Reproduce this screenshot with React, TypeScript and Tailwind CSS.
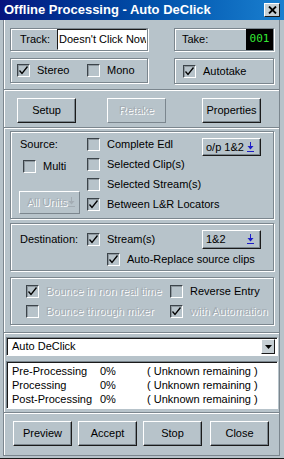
import React from "react";

const font = { fontFamily: '"Liberation Sans", Arial, sans-serif' };

function Tick() {
  return (
    <svg className="absolute left-0 top-0 h-[11px] w-[11px]" viewBox="0 0 11 11" fill="none">
      <path d="M1.5 5.5 L4 8.5 L9.5 1.5" stroke="#000" strokeWidth={1.3} />
    </svg>
  );
}

function Box({ checked }: { checked?: boolean }) {
  return (
    <span className="relative inline-block h-[13px] w-[13px] shrink-0 border border-t-[#3c444a] border-l-[#3c444a] border-r-white border-b-white shadow-[inset_1px_1px_0_#8d979e]">
      {checked && <Tick />}
    </span>
  );
}

function Check({
  label,
  checked,
  disabled,
}: {
  label: string;
  checked?: boolean;
  disabled?: boolean;
}) {
  return (
    <div className="flex items-center gap-[7px] whitespace-nowrap">
      <Box checked={checked} />
      <span
        className={
          disabled
            ? "text-[#a3acb3] [text-shadow:1px_1px_0_#fff]"
            : "text-black"
        }
      >
        {label}
      </span>
    </div>
  );
}

function Arrow({ color = "#1c1cc8" }: { color?: string }) {
  return (
    <svg className="h-[10px] w-[7px] shrink-0" viewBox="0 0 7 10" fill="none">
      <path d="M3.5 0 V6" stroke={color} strokeWidth={1} />
      <path d="M0.5 4 H6.5 L3.5 7.5 Z" fill={color} />
      <path d="M0 9.5 H7" stroke={color} strokeWidth={1} />
    </svg>
  );
}

function Button({ label, disabled }: { label: string; disabled?: boolean }) {
  return (
    <div
      className={
        disabled
          ? "flex h-[25px] w-[59px] items-center justify-center border border-t-white border-l-white border-r-[#7b868e] border-b-[#7b868e] text-[#a3acb3] [text-shadow:1px_1px_0_#fff]"
          : "flex h-[25px] w-[59px] items-center justify-center border border-t-white border-l-white border-r-[#1a1a1a] border-b-[#1a1a1a] shadow-[inset_-1px_-1px_0_#7b868e] text-black"
      }
    >
      {label}
    </div>
  );
}

function Dropdown({ label, h }: { label: string; h: string }) {
  return (
    <div
      className={`flex ${h} w-[59px] items-center justify-between border border-t-white border-l-white border-r-[#1a1a1a] border-b-[#1a1a1a] shadow-[inset_-1px_-1px_0_#7b868e] pl-[3px] pr-[6px]`}
    >
      <span>{label}</span>
      <Arrow />
    </div>
  );
}

function Separator() {
  return <div className="border-t border-t-[#7b868e] border-b border-b-white" />;
}

const status = ["Pre-Processing", "Processing", "Post-Processing"];

export default function App() {
  return (
    <div
      className="flex h-[459px] w-[284px] flex-col overflow-hidden bg-[#b7c3ca] text-[11px] text-black border-b border-b-[#1a1a1a]"
      style={font}
    >
      {/* Title bar */}
      <div className="flex h-[20px] shrink-0 items-center justify-between bg-gradient-to-r from-[#06137e] to-[#1a80d0] pl-[4px] pr-[4px]">
        <span className="text-[13px] font-bold text-white">
          Offline Processing - Auto DeClick
        </span>
        <div className="flex h-[14px] w-[16px] items-center justify-center border border-t-white border-l-white border-r-[#1a1a1a] border-b-[#1a1a1a] bg-[#c6cfd4]">
          <svg className="h-[8px] w-[9px]" viewBox="0 0 9 8">
            <path d="M1 0.5 L8 7.5 M8 0.5 L1 7.5" stroke="#000" strokeWidth={1.8} />
          </svg>
        </div>
      </div>

      {/* Body panel */}
      <div className="ml-[3px] mr-[4px] mb-[2px] flex flex-1 flex-col border-l border-r border-b border-l-[#7b868e] border-r-[#7b868e] border-b-[#7b868e] shadow-[inset_1px_0_0_#fff]">
        {/* Track / Take */}
        <div className="flex flex-col gap-[7px] pl-[6px] pr-[5px] pt-[8px] pb-[5px]">
          <div className="flex justify-between">
            <div className="flex h-[23px] w-[138px] border border-[#7b868e] shadow-[inset_1px_1px_0_#fff,1px_1px_0_#fff]">
              <span className="flex w-[46px] items-center pl-[9px]">Track:</span>
              <div className="flex flex-1 items-center overflow-hidden whitespace-nowrap bg-white pl-[1px] border border-t-[#1a1a1a] border-l-[#1a1a1a] border-r-white border-b-white">
                Doesn't Click Now
              </div>
            </div>
            <div className="flex h-[23px] w-[100px] items-stretch justify-between border border-[#7b868e] shadow-[inset_1px_1px_0_#fff,1px_1px_0_#fff]">
              <span className="flex items-center pl-[7px]">Take:</span>
              <div
                className="flex w-[27px] items-center justify-center bg-black text-[11px] text-[#34e834]"
                style={{ fontFamily: '"DejaVu Sans Mono", monospace' }}
              >
                001
              </div>
            </div>
          </div>
          <div className="flex justify-between">
            <div className="flex h-[25px] w-[138px] items-center border border-[#7b868e] pl-[6px] shadow-[inset_1px_1px_0_#fff,1px_1px_0_#fff]">
              <div className="w-[70px]">
                <Check label="Stereo" checked />
              </div>
              <Check label="Mono" />
            </div>
            <div className="flex h-[26px] w-[100px] items-center border border-[#7b868e] pl-[8px] shadow-[inset_1px_1px_0_#fff,1px_1px_0_#fff]">
              <Check label="Autotake" checked />
            </div>
          </div>
        </div>

        <Separator />

        {/* Setup row */}
        <div className="flex pt-[7px] pb-[4px] pl-[13px]">
          <Button label="Setup" />
          <div className="ml-[31px]">
            <Button label="Retake" disabled />
          </div>
          <div className="ml-[36px]">
            <Button label="Properties" />
          </div>
        </div>

        <Separator />

        {/* Source / Destination / Bounce */}
        <div className="flex flex-col pl-[6px] pt-[2px] pb-[7px]">
          <div className="flex h-[88px] w-[264px] border border-[#7b868e] shadow-[inset_1px_1px_0_#fff,1px_1px_0_#fff]">
            <div className="flex w-[76px] flex-col pl-[9px] pt-[4px]">
              <span className="flex h-[17px] items-center">Source:</span>
              <div className="mt-[5px] ml-[3px]">
                <Check label="Multi" />
              </div>
              <div className="mt-[16px] -ml-[1px] flex h-[23px] w-[61px] items-center gap-[1px] whitespace-nowrap border border-t-white border-l-white border-r-[#7b868e] border-b-[#7b868e] pl-[7px] text-[#a3acb3] [text-shadow:1px_1px_0_#fff]">
                <span>All Units</span>
                <Arrow color="#a3acb3" />
              </div>
            </div>
            <div className="flex w-[115px] flex-col pt-[2px]">
              <div className="flex h-[20px] items-center">
                <Check label="Complete Edl" />
              </div>
              <div className="flex h-[20px] items-center">
                <Check label="Selected Clip(s)" />
              </div>
              <div className="flex h-[20px] items-center">
                <Check label="Selected Stream(s)" />
              </div>
              <div className="flex h-[20px] items-center">
                <Check label="Between L&R Locators" checked />
              </div>
            </div>
            <div className="pt-[6px]">
              <Dropdown label="o/p 1&2" h="h-[18px]" />
            </div>
          </div>

          <div className="mt-[4px] flex h-[48px] w-[264px] flex-col border border-[#7b868e] pt-[5px] shadow-[inset_1px_1px_0_#fff,1px_1px_0_#fff]">
            <div className="flex h-[20px] items-center">
              <span className="w-[76px] pl-[9px]">Destination:</span>
              <div className="w-[115px]">
                <Check label="Stream(s)" checked />
              </div>
              <Dropdown label="1&2" h="h-[19px]" />
            </div>
            <div className="flex h-[20px] items-center pl-[96px]">
              <Check label="Auto-Replace source clips" checked />
            </div>
          </div>

          <div className="mt-[6px] flex h-[48px] w-[264px] flex-col border border-[#7b868e] pt-[3px] pl-[15px] shadow-[inset_1px_1px_0_#fff,1px_1px_0_#fff]">
            <div className="flex h-[20px] items-center">
              <div className="w-[144px]">
                <Check label="Bounce in non real time" checked disabled />
              </div>
              <Check label="Reverse Entry" />
            </div>
            <div className="flex h-[20px] items-center">
              <div className="w-[144px]">
                <Check label="Bounce through mixer" disabled />
              </div>
              <Check label="with Automation" checked disabled />
            </div>
          </div>
        </div>

        <Separator />

        {/* Preset + progress */}
        <div className="flex flex-col gap-[5px] pl-[2px] pr-[1px] pt-[3px] pb-[3px]">
          <div className="flex h-[19px] w-[272px] items-center justify-between bg-white border border-t-[#7b868e] border-l-[#7b868e] border-r-white border-b-white shadow-[inset_1px_1px_0_#1a1a1a] pl-[5px] pr-[2px]">
            <span>Auto DeClick</span>
            <div className="flex h-[15px] w-[14px] items-center justify-center bg-[#c6cfd4] border border-t-white border-l-white border-r-[#1a1a1a] border-b-[#1a1a1a]">
              <svg className="h-[4px] w-[7px]" viewBox="0 0 7 4">
                <path d="M0 0 H7 L3.5 4 Z" fill="#000" />
              </svg>
            </div>
          </div>
          <div className="flex h-[48px] w-[272px] flex-col bg-white border border-t-[#7b868e] border-l-[#7b868e] border-r-white border-b-white shadow-[inset_1px_1px_0_#1a1a1a] pl-[5px] pt-[2px]">
            {status.map((s) => (
              <div key={s} className="flex h-[14px] items-center">
                <span className="w-[88px]">{s}</span>
                <span className="w-[47px]">0%</span>
                <span>( Unknown remaining )</span>
              </div>
            ))}
          </div>
        </div>

        <Separator />

        {/* Bottom buttons */}
        <div className="flex gap-[6px] pl-[9px] pt-[7px]">
          <Button label="Preview" />
          <Button label="Accept" />
          <Button label="Stop" />
          <div className="ml-[2px]">
            <Button label="Close" />
          </div>
        </div>
      </div>
    </div>
  );
}
